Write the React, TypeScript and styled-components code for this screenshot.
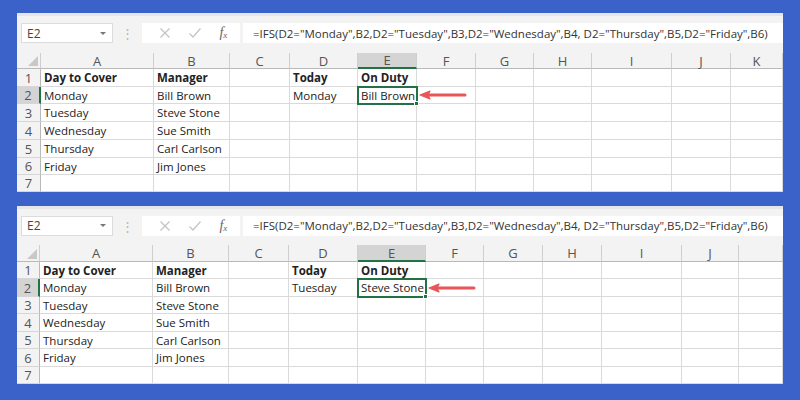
import styled, { createGlobalStyle } from "styled-components";

const GREEN = "#217346";
const GRID = "#dadada";

const FORMULA =
  '=IFS(D2="Monday",B2,D2="Tuesday",B3,D2="Wednesday",B4, D2="Thursday",B5,D2="Friday",B6)';

const DAYS = [
  ["Monday", "Bill Brown"],
  ["Tuesday", "Steve Stone"],
  ["Wednesday", "Sue Smith"],
  ["Thursday", "Carl Carlson"],
  ["Friday", "Jim Jones"],
];

type SheetData = {
  cols: number[];
  letters: string[];
  rows: number[];
  toolbar: number;
  today: string;
  onDuty: string;
};

const sheets: SheetData[] = [
  {
    cols: [24, 113, 76, 60, 68, 59, 59, 58, 58, 80, 59, 52],
    letters: ["A", "B", "C", "D", "E", "F", "G", "H", "I", "J", "K"],
    rows: [16, 18, 17, 18, 18, 18, 17, 17],
    toolbar: 40,
    today: "Monday",
    onDuty: "Bill Brown",
  },
  {
    cols: [23, 113, 76, 60, 69, 68, 58, 59, 59, 80, 57, 44],
    letters: ["A", "B", "C", "D", "E", "F", "G", "H", "I", "J", ""],
    rows: [17, 17, 18, 17, 18, 17, 18, 17],
    toolbar: 39,
    today: "Tuesday",
    onDuty: "Steve Stone",
  },
];

const GlobalStyle = createGlobalStyle`
  html, body {
    margin: 0;
    padding: 0;
    background: #3a62c8;
  }
  * {
    box-sizing: border-box;
  }
`;

const App = () => {
  return (
    <>
      <GlobalStyle />
      <Page>
        {sheets.map((sheet, i) => (
          <Sheet key={i} data={sheet} />
        ))}
      </Page>
    </>
  );
};

const Sheet = ({ data }: { data: SheetData }) => {
  const cellValue = (row: number, col: number): string => {
    if (row === 1) {
      return ["Day to Cover", "Manager", "", "Today", "On Duty"][col] || "";
    }
    if (row >= 2 && row <= 6) {
      const d = DAYS[row - 2];
      if (col === 0) return d[0];
      if (col === 1) return d[1];
      if (row === 2 && col === 3) return data.today;
      if (row === 2 && col === 4) return data.onDuty;
    }
    return "";
  };

  return (
    <Panel>
      <Toolbar $h={data.toolbar}>
        <NameBox>
          <span>E2</span>
          <DropArrow />
        </NameBox>
        <Dots>⋮</Dots>
        <ActionBox>
          <svg width="12" height="12" viewBox="0 0 12 12">
            <path d="M1.5 1.5 L10.5 10.5 M10.5 1.5 L1.5 10.5" stroke="#c4c4c4" strokeWidth="1.3" fill="none" />
          </svg>
          <svg width="14" height="12" viewBox="0 0 14 12">
            <path d="M1.5 6.5 L5 10 L12.5 1.5" stroke="#c4c4c4" strokeWidth="1.3" fill="none" />
          </svg>
          <FxLabel>
            f<sub>x</sub>
          </FxLabel>
        </ActionBox>
        <FormulaInput>{FORMULA}</FormulaInput>
      </Toolbar>
      <Grid $cols={data.cols} $rows={data.rows}>
        <Corner>
          <CornerTriangle />
        </Corner>
        {data.letters.map((l, c) => (
          <ColHead key={l + c} $active={c === 4}>
            {l}
          </ColHead>
        ))}
        {data.rows.slice(1).map((_, r) => {
          const row = r + 1;
          return [
            <RowHead key={`h${row}`} $active={row === 2}>
              {row}
            </RowHead>,
            ...data.letters.map((_, c) => {
              const selected = row === 2 && c === 4;
              return (
                <Cell key={`${row}-${c}`} $bold={row === 1} $selected={selected}>
                  {cellValue(row, c)}
                  {selected && (
                    <>
                      <FillHandle />
                      <Arrow width="48" height="10" viewBox="0 0 48 10">
                        <path d="M10 5 H46" stroke="#e8555a" strokeWidth="3" strokeLinecap="round" />
                        <path d="M1 5 L11 1 L9 5 L11 9 Z" fill="#e8555a" stroke="#e8555a" strokeWidth="1.2" strokeLinejoin="round" />
                      </Arrow>
                    </>
                  )}
                </Cell>
              );
            }),
          ];
        })}
      </Grid>
    </Panel>
  );
};

const Page = styled.div`
  width: 800px;
  height: 400px;
  padding: 13px 17px 0 17px;
  display: flex;
  flex-direction: column;
  gap: 14px;
  background: #3a62c8;
`;

const Panel = styled.div`
  width: 766px;
  background: #fff;
  display: flex;
  flex-direction: column;
  overflow: hidden;
  font-family: "Open Sans", "Noto Sans", sans-serif;
`;

const Toolbar = styled.div<{ $h: number }>`
  height: ${(p) => p.$h}px;
  background: #f3f3f3;
  border-top: 3px solid #e6e6e6;
  display: flex;
  align-items: center;
  padding: 0 0 3px 4px;
`;

const NameBox = styled.div`
  width: 92px;
  height: 20px;
  background: #fff;
  border: 1px solid #dcdcdc;
  display: flex;
  align-items: center;
  justify-content: space-between;
  padding: 0 6px 0 5px;
  font-size: 12px;
  color: #444;
`;

const DropArrow = styled.span`
  width: 0;
  height: 0;
  border-left: 3px solid transparent;
  border-right: 3px solid transparent;
  border-top: 3px solid #777;
`;

const Dots = styled.div`
  width: 29px;
  text-align: center;
  color: #b8b8b8;
  font-size: 13px;
`;

const ActionBox = styled.div`
  width: 98px;
  height: 20px;
  background: #fff;
  display: flex;
  align-items: center;
  justify-content: space-around;
  padding: 0 4px 0 8px;
`;

const FxLabel = styled.span`
  font-family: "Liberation Serif", serif;
  font-style: italic;
  font-size: 14px;
  color: #666;
  line-height: 1;
  sub {
    font-size: 9px;
    vertical-align: -1px;
  }
`;

const FormulaInput = styled.div`
  flex: 1;
  height: 20px;
  margin-left: 3px;
  background: #fff;
  display: flex;
  align-items: center;
  padding-left: 10px;
  font-size: 11.5px;
  color: #333;
  white-space: nowrap;
  overflow: hidden;
`;

const Grid = styled.div<{ $cols: number[]; $rows: number[] }>`
  display: grid;
  grid-template-columns: ${(p) => p.$cols.map((c) => `${c}px`).join(" ")};
  grid-template-rows: ${(p) => p.$rows.map((r) => `${r}px`).join(" ")};
`;

const Corner = styled.div`
  background: #f3f3f3;
  border-right: 1px solid #cfcfcf;
  border-bottom: 1px solid #b9b9b9;
  position: relative;
`;

const CornerTriangle = styled.div`
  position: absolute;
  right: 2px;
  bottom: 2px;
  width: 0;
  height: 0;
  border-left: 10px solid transparent;
  border-bottom: 10px solid #c8c8c8;
`;

const ColHead = styled.div<{ $active: boolean }>`
  background: ${(p) => (p.$active ? "#d4d4d4" : "#f3f3f3")};
  border-right: 1px solid #cfcfcf;
  border-bottom: ${(p) => (p.$active ? `2px solid ${GREEN}` : "1px solid #b9b9b9")};
  display: flex;
  align-items: center;
  justify-content: center;
  font-size: 13px;
  color: #555;
`;

const RowHead = styled.div<{ $active: boolean }>`
  background: ${(p) => (p.$active ? "#d4d4d4" : "#f3f3f3")};
  border-right: ${(p) => (p.$active ? `2px solid ${GREEN}` : "1px solid #b9b9b9")};
  border-bottom: 1px solid #d6d6d6;
  display: flex;
  align-items: center;
  justify-content: center;
  font-size: 13px;
  color: #555;
`;

const Cell = styled.div<{ $bold: boolean; $selected: boolean }>`
  position: relative;
  border-right: 1px solid ${GRID};
  border-bottom: 1px solid ${GRID};
  display: flex;
  align-items: center;
  padding: 0 3px;
  font-size: 11.5px;
  font-weight: ${(p) => (p.$bold ? 700 : 400)};
  color: #222;
  white-space: nowrap;
  ${(p) =>
    p.$selected &&
    `
    outline: 2px solid ${GREEN};
    outline-offset: -1px;
    z-index: 2;
  `}
`;

const FillHandle = styled.span`
  position: absolute;
  right: -3px;
  bottom: -3px;
  width: 5px;
  height: 5px;
  background: ${GREEN};
  border: 1px solid #fff;
`;

const Arrow = styled.svg`
  position: absolute;
  left: calc(100% + 3px);
  top: 50%;
  transform: translateY(-50%);
`;

export default App;
